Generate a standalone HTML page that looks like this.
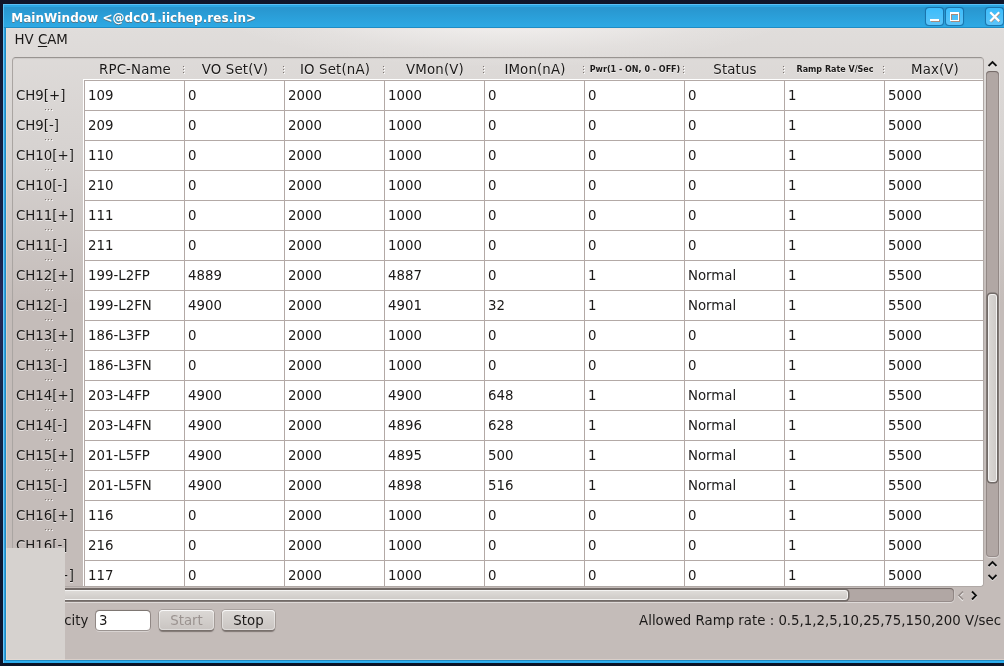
<!DOCTYPE html>
<html lang="en">
<head>
<meta charset="utf-8">
<title>MainWindow</title>
<style>
html,body{margin:0;padding:0}
body{width:1004px;height:666px;overflow:hidden;position:relative;background:#131a31;
 font-family:"DejaVu Sans","Liberation Sans",sans-serif;font-size:13.33px;color:#1b1918;line-height:16px}
#desk{position:absolute;left:0;top:0;width:1004px;height:666px;background:linear-gradient(180deg,#10162a 0,#141c3a 100px,#16244c 250px,#28295a 300px,#14284a 400px,#10203f 500px,#0e1730 560px,#0e1630 640px,#0d1427 666px)}
#win{will-change:transform;position:absolute;left:3px;top:4px;width:1001px;height:659px;background:linear-gradient(90deg,#6ac6fb 0,#6ac6fb 1px,#2fa0dc 1px,#2fa0dc 2px,#1e8cc6 2px,#1e8cc6 3px,#30aeee 3px);box-shadow:0 1px 1px rgba(10,20,40,.5)}
#wbot{position:absolute;left:1px;top:656px;width:1000px;height:3px;background:linear-gradient(180deg,#1e8cc6 0,#1e8cc6 1px,#30b0f0 1px,#30b0f0 2px,#2ba6e6 3px)}
#cedge{position:absolute;left:3px;top:24px;width:998px;height:632px;box-shadow:inset 1px 1px 0 rgba(238,224,216,.5),inset 0 -1px 0 rgba(238,224,216,.5)}
#tbar{position:absolute;left:0;top:0;width:1001px;height:24px;background:linear-gradient(180deg,#5cc0f5 0,#5cc0f5 1px,#2ba6e2 1px,#2ba6e2 2.5px,#2997d0 3.5px,#2997d0 5px,#2da9e4 23px,#1f8cc4 23px,#1f8cc4 24px);box-shadow:inset 1px 0 0 #5cc0f3}
#title{position:absolute;left:8.2px;top:6px;font-size:12px;letter-spacing:0.05px;font-weight:bold;color:#fff;white-space:nowrap;text-shadow:0 1px 0 rgba(120,80,60,.55)}
.wb{position:absolute;top:3px;width:19px;height:19px;box-sizing:border-box;border:1px solid rgba(20,100,155,.7);border-radius:4px;background:linear-gradient(180deg,#3bbcfb,#5cc4f8);background-clip:padding-box;box-shadow:0 0 1px rgba(25,110,165,.5)}
.wb svg{position:absolute;left:-1px;top:-1px}
#client{position:absolute;left:3px;top:24px;width:998px;height:632px;overflow:hidden;
 background:radial-gradient(ellipse 300px 64px at 500.5px -24px,rgba(252,250,249,1) 0,rgba(252,250,249,.4) 50%,rgba(252,250,249,.145) 75%,rgba(252,250,249,0) 100%),linear-gradient(180deg,#e2dfdd -24px,#d6d2d0 126px,#c4bcb9 276px,#c4bcb9 100%)}
#menu{position:absolute;left:8.5px;top:4px;white-space:nowrap}
.u{text-decoration:underline;text-underline-offset:2px;text-decoration-thickness:1px}
#frame{position:absolute;left:6px;top:29px;width:972px;height:530px;border-radius:3px;overflow:hidden}
#fb{position:absolute;left:0;top:0;width:972px;height:530px;box-sizing:border-box;border-radius:3.5px;border:1px solid;border-color:#989491 #b0a9a6 #b0a9a6 #aaa5a2;box-shadow:inset 0 1px 1px rgba(0,0,0,.07)}
#hhead{position:absolute;left:0;top:0;width:972px;height:22px}
.hh,.vh{text-shadow:0 1px 0 rgba(255,255,255,.6)}
.hh{position:absolute;top:5px;width:100px;margin-left:1px;letter-spacing:.15px;text-align:center;white-space:nowrap}
.hh.sm{font-size:8px;font-weight:bold;top:5px;letter-spacing:0}
.vd{position:absolute;top:9px;width:1px;height:1px;background:#7d7572;box-shadow:0 3px 0 #7d7572,0 6px 0 #7d7572,1px 1px 0 #fff,1px 4px 0 #fff,1px 7px 0 #fff}
#vhead{position:absolute;left:0;top:0;width:71px;height:530px}
.vh{position:absolute;left:4px;margin-top:1px;white-space:nowrap;height:30px;line-height:30px}
.hd{position:absolute;left:33px;width:1px;height:1px;background:#7d7572;box-shadow:3px 0 0 #7d7572,6px 0 0 #7d7572,1px 1px 0 #fff,4px 1px 0 #fff,7px 1px 0 #fff}
#cells{position:absolute;left:71px;top:22px;width:900px;height:507px;background:#fff;overflow:hidden;
 border-left:1px solid #fff;border-top:1px solid #fff;box-sizing:border-box}
#cells:before{content:"";position:absolute;left:0;top:0;right:0;bottom:0;border-left:1px solid #b3a9a6;border-top:1px solid #b3a9a6}
.tr{position:absolute;left:1px;height:30px;width:900px;white-space:nowrap;font-size:0;margin-top:1px}
.td{display:inline-block;box-sizing:border-box;width:100px;height:30px;line-height:30px;font-size:13.33px;padding-left:3px;
 border-right:1px solid #b3a9a6;border-bottom:1px solid #b3a9a6;vertical-align:top;overflow:hidden}
#overlay{position:absolute;left:3px;top:544px;width:59px;height:112px;background:#d6d2cf}
/* scrollbars */
.groove{position:absolute;background:#b1a7a4;border-radius:4px;box-shadow:inset 0 1px 1px rgba(60,50,48,.4), inset 0 0 0 1px rgba(90,80,78,.3), 0 1px 0 rgba(255,255,255,.45), 1px 0 0 rgba(255,255,255,.2)}
.handle{position:absolute;box-sizing:border-box;border:1px solid #f4f3f2;border-radius:3px;box-shadow:0 0 0 1.5px #716a67}
.arr{position:absolute}
/* bottom */
#lbl1{position:absolute;left:13px;top:585px;white-space:nowrap}
#inp{position:absolute;left:90px;top:582.5px;width:54px;height:19.5px;box-sizing:border-box;background:#fff;border-radius:3.5px;
 box-shadow:0 0 0 1px rgba(105,96,92,.55), 0 -1px 1px rgba(60,55,52,.35), 0 2px 0 rgba(255,255,255,.35);line-height:20px;padding-left:3px}
.btn{position:absolute;top:582px;height:20px;box-sizing:border-box;border-radius:4px;text-align:center;line-height:22px;
 background:linear-gradient(180deg,#dcd9d6,#c9c4c1);box-shadow:inset 0 1px 0 rgba(255,255,255,.75), inset 0 0 0 1px rgba(255,255,255,.4), 0 0 0 1px rgba(100,92,88,.28), 0 1.5px 1px rgba(60,52,48,.5)}
#lbl2{position:absolute;right:3px;top:585px;white-space:nowrap}
</style>
</head>
<body>
<div id="desk"></div>
<div id="win">
<div id="tbar">
<div id="title">MainWindow &lt;@dc01.iichep.res.in&gt;</div>
<div class="wb" style="left:922px"><svg width="19" height="19" viewBox="0 0 19 19"><path d="M6 13h9v2H6z" fill="#a58c7e"/><path d="M5 12h9v2H5z" fill="#fff"/></svg></div>
<div class="wb" style="left:942px"><svg width="19" height="19" viewBox="0 0 19 19"><path d="M6 6h9v9h-9zM7 8v6h7v-6z" fill="#a58c7e" fill-rule="evenodd"/><path d="M5 5h9v9h-9zM6 7v6h7v-6z" fill="#fff" fill-rule="evenodd"/></svg></div>
<div class="wb" style="left:982px"><svg width="19" height="19" viewBox="0 0 19 19"><path d="M6.700 6.700l7.200 7.200M13.900 6.700l-7.200 7.200" stroke="#a58c7e" stroke-width="2.200" stroke-linecap="square" fill="none"/><path d="M6 6l7.400 7.400M13.400 6l-7.400 7.400" stroke="#fff" stroke-width="2.200" stroke-linecap="square" fill="none"/></svg></div>
</div>
<div id="client">
<div id="menu">HV <span class="u">C</span>AM</div>
<div id="frame">
<div id="hhead">
<div class="hh" style="left:72px">RPC-Name</div>
<div class="hh" style="left:172px">VO Set(V)</div>
<div class="hh" style="left:272px">IO Set(nA)</div>
<div class="hh" style="left:372px">VMon(V)</div>
<div class="hh" style="left:472px">IMon(nA)</div>
<div class="hh sm" style="left:572px">Pwr(1 - ON, 0 - OFF)</div>
<div class="hh" style="left:672px">Status</div>
<div class="hh sm" style="left:772px">Ramp Rate V/Sec</div>
<div class="hh" style="left:872px">Max(V)</div>
<i class="vd" style="left:171px"></i>
<i class="vd" style="left:271px"></i>
<i class="vd" style="left:371px"></i>
<i class="vd" style="left:471px"></i>
<i class="vd" style="left:571px"></i>
<i class="vd" style="left:671px"></i>
<i class="vd" style="left:771px"></i>
<i class="vd" style="left:871px"></i>
<i class="vd" style="left:971px"></i>
</div>
<div id="vhead">
<div class="vh" style="top:23px">CH9[+]</div>
<i class="hd" style="top:52px"></i>
<div class="vh" style="top:53px">CH9[-]</div>
<i class="hd" style="top:82px"></i>
<div class="vh" style="top:83px">CH10[+]</div>
<i class="hd" style="top:112px"></i>
<div class="vh" style="top:113px">CH10[-]</div>
<i class="hd" style="top:142px"></i>
<div class="vh" style="top:143px">CH11[+]</div>
<i class="hd" style="top:172px"></i>
<div class="vh" style="top:173px">CH11[-]</div>
<i class="hd" style="top:202px"></i>
<div class="vh" style="top:203px">CH12[+]</div>
<i class="hd" style="top:232px"></i>
<div class="vh" style="top:233px">CH12[-]</div>
<i class="hd" style="top:262px"></i>
<div class="vh" style="top:263px">CH13[+]</div>
<i class="hd" style="top:292px"></i>
<div class="vh" style="top:293px">CH13[-]</div>
<i class="hd" style="top:322px"></i>
<div class="vh" style="top:323px">CH14[+]</div>
<i class="hd" style="top:352px"></i>
<div class="vh" style="top:353px">CH14[-]</div>
<i class="hd" style="top:382px"></i>
<div class="vh" style="top:383px">CH15[+]</div>
<i class="hd" style="top:412px"></i>
<div class="vh" style="top:413px">CH15[-]</div>
<i class="hd" style="top:442px"></i>
<div class="vh" style="top:443px">CH16[+]</div>
<i class="hd" style="top:472px"></i>
<div class="vh" style="top:473px">CH16[-]</div>
<i class="hd" style="top:502px"></i>
<div class="vh" style="top:503px">CH17[+]</div>
<i class="hd" style="top:532px"></i>
</div>
<div id="cells">
<div class="tr" style="top:0px"><span class="td">109</span><span class="td">0</span><span class="td">2000</span><span class="td">1000</span><span class="td">0</span><span class="td">0</span><span class="td">0</span><span class="td">1</span><span class="td">5000</span></div>
<div class="tr" style="top:30px"><span class="td">209</span><span class="td">0</span><span class="td">2000</span><span class="td">1000</span><span class="td">0</span><span class="td">0</span><span class="td">0</span><span class="td">1</span><span class="td">5000</span></div>
<div class="tr" style="top:60px"><span class="td">110</span><span class="td">0</span><span class="td">2000</span><span class="td">1000</span><span class="td">0</span><span class="td">0</span><span class="td">0</span><span class="td">1</span><span class="td">5000</span></div>
<div class="tr" style="top:90px"><span class="td">210</span><span class="td">0</span><span class="td">2000</span><span class="td">1000</span><span class="td">0</span><span class="td">0</span><span class="td">0</span><span class="td">1</span><span class="td">5000</span></div>
<div class="tr" style="top:120px"><span class="td">111</span><span class="td">0</span><span class="td">2000</span><span class="td">1000</span><span class="td">0</span><span class="td">0</span><span class="td">0</span><span class="td">1</span><span class="td">5000</span></div>
<div class="tr" style="top:150px"><span class="td">211</span><span class="td">0</span><span class="td">2000</span><span class="td">1000</span><span class="td">0</span><span class="td">0</span><span class="td">0</span><span class="td">1</span><span class="td">5000</span></div>
<div class="tr" style="top:180px"><span class="td">199-L2FP</span><span class="td">4889</span><span class="td">2000</span><span class="td">4887</span><span class="td">0</span><span class="td">1</span><span class="td">Normal</span><span class="td">1</span><span class="td">5500</span></div>
<div class="tr" style="top:210px"><span class="td">199-L2FN</span><span class="td">4900</span><span class="td">2000</span><span class="td">4901</span><span class="td">32</span><span class="td">1</span><span class="td">Normal</span><span class="td">1</span><span class="td">5500</span></div>
<div class="tr" style="top:240px"><span class="td">186-L3FP</span><span class="td">0</span><span class="td">2000</span><span class="td">1000</span><span class="td">0</span><span class="td">0</span><span class="td">0</span><span class="td">1</span><span class="td">5000</span></div>
<div class="tr" style="top:270px"><span class="td">186-L3FN</span><span class="td">0</span><span class="td">2000</span><span class="td">1000</span><span class="td">0</span><span class="td">0</span><span class="td">0</span><span class="td">1</span><span class="td">5000</span></div>
<div class="tr" style="top:300px"><span class="td">203-L4FP</span><span class="td">4900</span><span class="td">2000</span><span class="td">4900</span><span class="td">648</span><span class="td">1</span><span class="td">Normal</span><span class="td">1</span><span class="td">5500</span></div>
<div class="tr" style="top:330px"><span class="td">203-L4FN</span><span class="td">4900</span><span class="td">2000</span><span class="td">4896</span><span class="td">628</span><span class="td">1</span><span class="td">Normal</span><span class="td">1</span><span class="td">5500</span></div>
<div class="tr" style="top:360px"><span class="td">201-L5FP</span><span class="td">4900</span><span class="td">2000</span><span class="td">4895</span><span class="td">500</span><span class="td">1</span><span class="td">Normal</span><span class="td">1</span><span class="td">5500</span></div>
<div class="tr" style="top:390px"><span class="td">201-L5FN</span><span class="td">4900</span><span class="td">2000</span><span class="td">4898</span><span class="td">516</span><span class="td">1</span><span class="td">Normal</span><span class="td">1</span><span class="td">5500</span></div>
<div class="tr" style="top:420px"><span class="td">116</span><span class="td">0</span><span class="td">2000</span><span class="td">1000</span><span class="td">0</span><span class="td">0</span><span class="td">0</span><span class="td">1</span><span class="td">5000</span></div>
<div class="tr" style="top:450px"><span class="td">216</span><span class="td">0</span><span class="td">2000</span><span class="td">1000</span><span class="td">0</span><span class="td">0</span><span class="td">0</span><span class="td">1</span><span class="td">5000</span></div>
<div class="tr" style="top:480px"><span class="td">117</span><span class="td">0</span><span class="td">2000</span><span class="td">1000</span><span class="td">0</span><span class="td">0</span><span class="td">0</span><span class="td">1</span><span class="td">5000</span></div>
</div>
<div id="fb"></div>
</div>
<div class="groove" style="left:980px;top:43px;width:13px;height:486px"></div>
<div class="handle" style="left:982px;top:266px;width:9px;height:188px;background:linear-gradient(90deg,#dad7d4,#cfcbc8)"></div>
<svg class="arr" style="left:981px;top:31.5px" width="11" height="8" viewBox="0 0 11 8"><path d="M1.500 7L5.500 3L9.500 7" fill="none" stroke="#fff" stroke-width="1.800" opacity=".7"/><path d="M1.500 6L5.500 2L9.500 6" fill="none" stroke="#111" stroke-width="1.800"/></svg>
<svg class="arr" style="left:981px;top:532px" width="11" height="8" viewBox="0 0 11 8"><path d="M1.500 7L5.500 3L9.500 7" fill="none" stroke="#fff" stroke-width="1.800" opacity=".7"/><path d="M1.500 6L5.500 2L9.500 6" fill="none" stroke="#111" stroke-width="1.800"/></svg>
<svg class="arr" style="left:981px;top:545px" width="11" height="8" viewBox="0 0 11 8"><path d="M1.500 3L5.500 7L9.500 3" fill="none" stroke="#fff" stroke-width="1.800" opacity=".7"/><path d="M1.500 2L5.500 6L9.500 2" fill="none" stroke="#111" stroke-width="1.800"/></svg>
<div class="groove" style="left:0px;top:560px;width:948px;height:14px"></div>
<div class="handle" style="left:-10px;top:562px;width:852px;height:10px;background:linear-gradient(180deg,#dedbd8,#cfcbc8)"></div>
<svg class="arr" style="left:950.6px;top:562px" width="8" height="12" viewBox="0 0 8 12"><path d="M6 1.500L2 5.500L6 9.500" fill="none" stroke="#fff" stroke-width="1.800" opacity=".7" transform="translate(0,1)"/><path d="M6 1.500L2 5.500L6 9.500" fill="none" stroke="#948c89" stroke-width="1.600"/></svg>
<svg class="arr" style="left:964.4px;top:562px" width="8" height="12" viewBox="0 0 8 12"><path d="M2 1.500L6 5.500L2 9.500" fill="none" stroke="#fff" stroke-width="1.800" opacity=".7" transform="translate(0,1)"/><path d="M2 1.500L6 5.500L2 9.500" fill="none" stroke="#111" stroke-width="1.800"/></svg>
<div id="lbl1">Periodicity</div>
<div id="inp">3</div>
<div class="btn" style="left:153px;width:55px;color:#9b9390">Start</div>
<div class="btn" style="left:216px;width:53px">Stop</div>
<div id="lbl2">Allowed Ramp rate : 0.5,1,2,5,10,25,75,150,200 V/sec</div>
</div>
<div id="overlay"></div>
<div id="cedge"></div>
<div id="wbot"></div>
</div>
</body>
</html>
